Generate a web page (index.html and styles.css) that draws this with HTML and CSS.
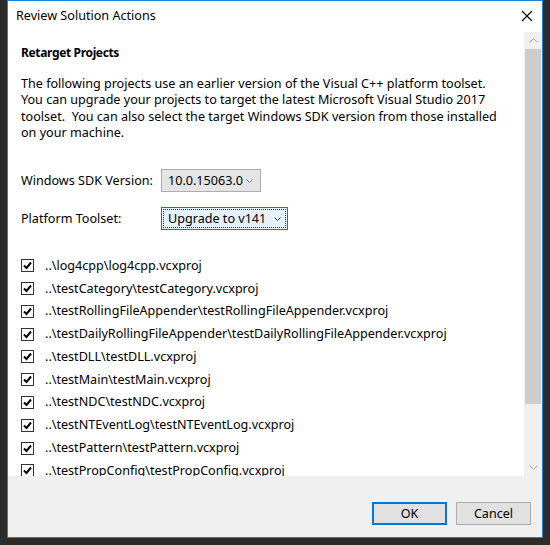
FILE: index.html
```html
<!DOCTYPE html>
<html lang="en">
<head>
    <meta charset="UTF-8">
    <title>Review Solution Actions</title>
    <link rel="stylesheet" href="styles.css">
</head>
<body>
    <div class="window">
        <div class="titlebar">
            <span class="title">Review Solution Actions</span>
            <svg class="close" width="12" height="12" viewBox="0 0 12 12">
                <path d="M1 1 L11 11 M11 1 L1 11" stroke="#000" stroke-width="1.1" fill="none"/>
            </svg>
        </div>

        <div class="body">
            <div class="content">
                <h2>Retarget Projects</h2>
                <p class="intro">
                    The following projects use an earlier version of the Visual C++ platform toolset.<br>
                    You can upgrade your projects to target the latest Microsoft Visual Studio 2017<br>
                    toolset.&nbsp; You can also select the target Windows SDK version from those installed<br>
                    on your machine.
                </p>

                <div class="field">
                    <span class="label">Windows SDK Version:</span>
                    <div class="combo">
                        <span>10.0.15063.0</span>
                        <svg class="arrow" width="7" height="4" viewBox="0 0 7 4"><path d="M0.5 0.5 L3.5 3.5 L6.5 0.5" stroke="#888" fill="none"/></svg>
                    </div>
                </div>
                <div class="field toolset">
                    <span class="label">Platform Toolset:</span>
                    <div class="combo focused">
                        <span>Upgrade to v141</span>
                        <svg class="arrow" width="7" height="4" viewBox="0 0 7 4"><path d="M0.5 0.5 L3.5 3.5 L6.5 0.5" stroke="#333" fill="none"/></svg>
                    </div>
                </div>

                <ul id="project-list" class="projects">
                    <!-- filled by the script -->
                </ul>
            </div>

            <div class="scrollbar">
                <div class="sb-btn">
                    <svg width="9" height="5" viewBox="0 0 9 5"><path d="M0.5 4.5 L4.5 0.5 L8.5 4.5" stroke="#a6a6a6" fill="none"/></svg>
                </div>
                <div class="sb-thumb"></div>
                <div class="sb-track"></div>
                <div class="sb-btn">
                    <svg width="9" height="5" viewBox="0 0 9 5"><path d="M0.5 0.5 L4.5 4.5 L8.5 0.5" stroke="#a6a6a6" fill="none"/></svg>
                </div>
            </div>
        </div>

        <div class="footer">
            <button class="btn default">OK</button>
            <button class="btn">Cancel</button>
        </div>
    </div>

    <script>
        const projects = [
            "..\\log4cpp\\log4cpp.vcxproj",
            "..\\testCategory\\testCategory.vcxproj",
            "..\\testRollingFileAppender\\testRollingFileAppender.vcxproj",
            "..\\testDailyRollingFileAppender\\testDailyRollingFileAppender.vcxproj",
            "..\\testDLL\\testDLL.vcxproj",
            "..\\testMain\\testMain.vcxproj",
            "..\\testNDC\\testNDC.vcxproj",
            "..\\testNTEventLog\\testNTEventLog.vcxproj",
            "..\\testPattern\\testPattern.vcxproj",
            "..\\testPropConfig\\testPropConfig.vcxproj"
        ];

        const list = document.getElementById('project-list');
        const check = '<svg width="11" height="11" viewBox="0 0 11 11"><path d="M2 5.5 L4.5 8 L9 2.5" stroke="#000" stroke-width="2" fill="none"/></svg>';

        projects.forEach(name => {
            const li = document.createElement('li');
            li.innerHTML = `<span class="checkbox">${check}</span><span class="name">${name}</span>`;
            list.appendChild(li);
        });
    </script>
</body>
</html>
```

FILE: styles.css
```css
body {
    margin: 0;
    background-color: #2b2b2b;
    font-family: "Noto Sans", "Open Sans", sans-serif;
    font-size: 12.6px;
    color: #000;
}

.window {
    margin-left: 7px;
    width: 534px;
    height: 536px;
    border: 1px solid #1883d7;
    background-color: #fff;
    display: flex;
    flex-direction: column;
}

.titlebar {
    height: 31px;
    display: flex;
    align-items: center;
    justify-content: space-between;
    padding: 0 9px 0 8px;
    flex-shrink: 0;
}

.title {
    line-height: 16px;
    margin-top: -1px;
}

.close {
    margin-top: -2px;
}

.body {
    height: 444px;
    display: flex;
    overflow: hidden;
    flex-shrink: 0;
}

.content {
    flex: 1;
    padding: 13px 0 0 13px;
    overflow: hidden;
}

h2 {
    margin: 0;
    font-size: 12px;
    line-height: 16px;
    font-weight: bold;
    letter-spacing: -0.35px;
}

.intro {
    margin: 15px 0 0 0;
    line-height: 16.33px;
    white-space: nowrap;
}

.field {
    display: flex;
    align-items: center;
    margin-top: 28px;
    height: 23px;
}

.field.toolset {
    margin-top: 15px;
}

.label {
    width: 140px;
    line-height: 16px;
}

.combo {
    box-sizing: border-box;
    height: 23px;
    width: 100px;
    border: 1px solid #adadad;
    background-color: #e5e5e5;
    display: flex;
    align-items: center;
    justify-content: space-between;
    padding: 0 7px 0 6px;
    line-height: 16px;
}

.combo.focused {
    width: 127px;
    border-color: #0078d7;
    background-color: #e5f1fb;
    outline: 1px dotted #333;
    outline-offset: -3px;
    padding-right: 6px;
}

.projects {
    list-style-type: none;
    margin: 24px 0 0 0;
    padding: 0;
}

.projects li {
    height: 22.8px;
    display: flex;
    align-items: center;
    white-space: nowrap;
}

.checkbox {
    box-sizing: border-box;
    width: 13px;
    height: 13px;
    border: 1px solid #333;
    background-color: #fff;
    display: flex;
    align-items: center;
    justify-content: center;
    margin-right: 11px;
    flex-shrink: 0;
}

.name {
    line-height: 16px;
}

.scrollbar {
    width: 18px;
    background-color: #f0f0f0;
    display: flex;
    flex-direction: column;
    flex-shrink: 0;
}

.sb-btn {
    height: 17px;
    display: flex;
    align-items: center;
    justify-content: center;
    flex-shrink: 0;
}

.sb-thumb {
    height: 355px;
    margin: 0 1px;
    background-color: #cdcdcd;
    flex-shrink: 0;
}

.sb-track {
    flex: 1;
}

.footer {
    flex: 1;
    background-color: #f0f0f0;
    display: flex;
    justify-content: flex-end;
    align-items: flex-start;
    gap: 9px;
    padding: 26px 11px 0 0;
}

.btn {
    box-sizing: border-box;
    width: 75px;
    height: 23px;
    border: 1px solid #adadad;
    background-color: #e1e1e1;
    font-family: inherit;
    font-size: 12.6px;
    color: #000;
    padding: 0;
}

.btn.default {
    border: 2px solid #0078d7;
}
```
